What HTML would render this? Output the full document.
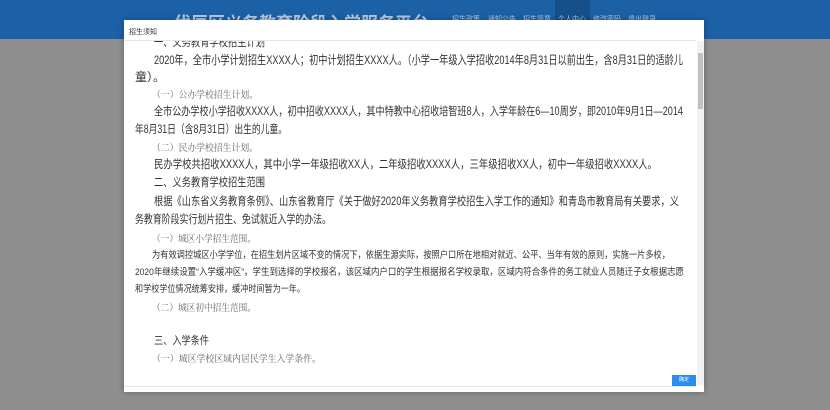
<!DOCTYPE html>
<html><head><meta charset="utf-8"><style>
body{margin:0;width:830px;height:410px;overflow:hidden;background:#8e8e8e;font-family:"Liberation Sans","Noto Sans CJK SC",sans-serif;position:relative}
.hdr{position:absolute;left:0;top:0;width:830px;height:39px;background:#1c60a6}
.act{position:absolute;left:555px;top:0;width:35px;height:39px;background:#164f8a}
.title{position:absolute;left:174px;top:9px;color:#b9c9dd;font-size:17px;font-weight:bold;white-space:nowrap}
.nav{position:absolute;top:14px;color:#b9c9dd;font-size:7px}
.modal{position:absolute;left:124px;top:20px;width:580px;height:372px;background:#fff;box-shadow:0 0 6px rgba(0,0,0,.3)}
.mt{position:absolute;left:5px;top:7px;font-size:7px;color:#333}
.body{position:absolute;left:0;top:20px;width:572px;height:345px;overflow:hidden;border-top:1px solid #e5e5e5;border-bottom:1px solid #e5e5e5}
.sb{position:absolute;left:573px;top:21px;width:7px;height:344px;background:#f1f1f1}
.th{position:absolute;left:574px;top:33px;width:5px;height:56px;background:#c1c1c1}
.l{position:absolute;white-space:nowrap;color:#333;font-size:11.5px;overflow:visible}
.l span{display:inline-block;transform-origin:0 50%}
.s{font-family:"Liberation Serif","Noto Serif CJK SC",serif;font-size:9.5px;color:#666}
.btn{position:absolute;left:548px;top:355px;width:24px;height:11px;background:#2d8cf0;color:#fff;font-size:5px;text-align:center;line-height:11px}
</style></head><body>
<div class="hdr"><div class="act"></div></div>
<div class="title">伐辰区义务教育阶段入学服务平台</div>
<div class="nav" style="left:452px">招生政策</div><div class="nav" style="left:488px">通知公告</div><div class="nav" style="left:523px">招生简章</div><div class="nav" style="left:558px">个人中心</div><div class="nav" style="left:593px">修改密码</div><div class="nav" style="left:628px">退出登录</div>
<div class="modal">
<div class="mt">招生须知</div>
<div class="body">
<div class="l" style="left:30px;top:-7px;width:111px"><span>一、义务教育学校招生计划</span></div>
<div class="l" style="left:30px;top:10px;width:529px;font-size:12px"><span>2020年，全市小学计划招生XXXX人；初中计划招生XXXX人。（小学一年级入学招收2014年8月31日以前出生，含8月31日的适龄儿</span></div>
<div class="l" style="left:11px;top:27px;font-size:12px"><span>童）。</span></div>
<div class="l s" style="left:28px;top:46px;width:106px"><span>（一）公办学校招生计划。</span></div>
<div class="l" style="left:30px;top:62px;width:529px"><span>全市公办学校小学招收XXXX人，初中招收XXXX人，其中特教中心招收培智班8人，入学年龄在6—10周岁，即2010年9月1日—2014</span></div>
<div class="l" style="left:11px;top:80px;width:152px"><span>年8月31日（含8月31日）出生的儿童。</span></div>
<div class="l s" style="left:28px;top:99px;width:106px"><span>（二）民办学校招生计划。</span></div>
<div class="l" style="left:30px;top:115px;width:503px"><span>民办学校共招收XXXX人，其中小学一年级招收XX人，二年级招收XXXX人，三年级招收XX人，初中一年级招收XXXX人。</span></div>
<div class="l" style="left:30px;top:133px;width:111px"><span>二、义务教育学校招生范围</span></div>
<div class="l" style="left:30px;top:152px;width:525px"><span>根据《山东省义务教育条例》、山东省教育厅《关于做好2020年义务教育学校招生入学工作的通知》和青岛市教育局有关要求，义</span></div>
<div class="l" style="left:11px;top:170px;width:196px"><span>务教育阶段实行划片招生、免试就近入学的办法。</span></div>
<div class="l s" style="left:28px;top:190px;width:104px"><span>（一）城区小学招生范围。</span></div>
<div class="l" style="left:28px;top:206px;width:518px;font-size:9.5px"><span>为有效调控城区小学学位，在招生划片区域不变的情况下，依据生源实际，按照户口所在地相对就近、公平、当年有效的原则，实施一片多校，</span></div>
<div class="l" style="left:11px;top:223px;width:549px;font-size:9.5px"><span>2020年继续设置“入学缓冲区”，学生到选择的学校报名，该区域内户口的学生根据报名学校录取，区域内符合条件的务工就业人员随迁子女根据志愿</span></div>
<div class="l" style="left:11px;top:240px;width:170px;font-size:9.5px"><span>和学校学位情况统筹安排，缓冲时间暂为一年。</span></div>
<div class="l s" style="left:28px;top:259px;width:104px"><span>（二）城区初中招生范围。</span></div>
<div class="l" style="left:30px;top:291px;width:55px;font-size:11px"><span>三、入学条件</span></div>
<div class="l s" style="left:28px;top:310px;width:169px"><span>（一）城区学校区域内居民学生入学条件。</span></div>
</div>
<div class="sb"></div><div class="th"></div>
<div class="btn">确定</div>
</div>
<script>
document.querySelectorAll('.l').forEach(function(d){var w=parseFloat(d.style.width);if(!w)return;var s=d.firstElementChild;var sw=s.getBoundingClientRect().width;if(sw>0)s.style.transform='scaleX('+(w/sw)+')';});
</script>
</body></html>
